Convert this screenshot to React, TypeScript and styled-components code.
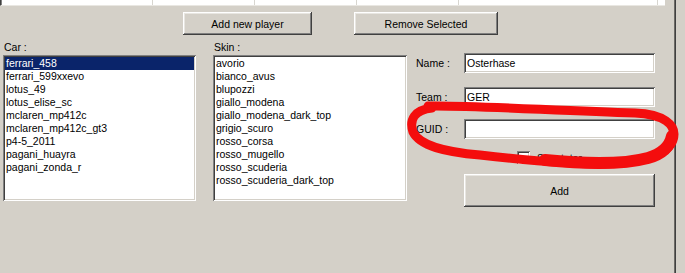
import React from "react";
import styled, { createGlobalStyle } from "styled-components";

const Global = createGlobalStyle`
  html, body { margin: 0; padding: 0; background: #d4d0c8; }
  body { font-family: "Liberation Sans", Arial, sans-serif; font-size: 10.5px; color: #000; }
`;

const Window = styled.div`
  position: relative;
  width: 685px;
  height: 273px;
  background: #d4d0c8;
  display: flex;
  overflow: hidden;
`;

const Main = styled.div`
  width: 674px;
  display: flex;
  flex-direction: column;
`;

const Splitter = styled.div`
  width: 2px;
  background: #404040;
  box-shadow: inset 1px 0 #6c6a66;
`;

const TopTable = styled.div`
  display: flex;
  width: 665px;
  height: 6px;
  background: #fff;
  border-left: 1px solid #404040;
  border-bottom: 1px solid #e9e7e2;
  box-sizing: border-box;
  box-shadow: inset 1px 0 #808080;
`;

const TopCell = styled.div<{ $w: number }>`
  width: ${(p) => p.$w}px;
  height: 100%;
  border-right: 1px solid #d8d6d0;
`;

const ButtonRow = styled.div`
  display: flex;
  gap: 42px;
  padding: 6px 0 0 183px;
`;

const Button = styled.button<{ $w: number; $h: number }>`
  width: ${(p) => p.$w}px;
  height: ${(p) => p.$h}px;
  margin: 0;
  padding: 1px 0 0;
  border: none;
  background: #d4d0c8;
  font-family: "Liberation Sans", Arial, sans-serif;
  font-size: 10.5px;
  color: #000;
  display: flex;
  align-items: center;
  justify-content: center;
  box-shadow: inset -1px -1px #404040, inset 1px 1px #ffffff,
    inset -2px -2px #808080, inset 2px 2px #e8e6e1;
`;

const Content = styled.div`
  display: flex;
  padding: 4px 0 0 3px;
`;

const ListColumn = styled.div<{ $w: number; $ml: number }>`
  width: ${(p) => p.$w}px;
  margin-left: ${(p) => p.$ml}px;
  display: flex;
  flex-direction: column;
`;

const Label = styled.div`
  height: 16px;
  line-height: 16px;
  padding-left: 1px;
  white-space: nowrap;
`;

const ListBox = styled.div`
  height: 146px;
  background: #fff;
  padding: 2px;
  box-sizing: border-box;
  box-shadow: inset 1px 1px #808080, inset -1px -1px #ffffff,
    inset 2px 2px #404040, inset -2px -2px #d4d0c8;
`;

const Item = styled.div<{ $sel?: boolean }>`
  height: 13px;
  line-height: 13px;
  padding-left: 1px;
  white-space: nowrap;
  background: ${(p) => (p.$sel ? "#0a246a" : "transparent")};
  color: ${(p) => (p.$sel ? "#fff" : "#000")};
`;

const Form = styled.div`
  margin-left: 8px;
  padding-top: 14px;
  display: flex;
  flex-direction: column;
`;

const FormRow = styled.div<{ $mt: number }>`
  display: flex;
  align-items: center;
  margin-top: ${(p) => p.$mt}px;
`;

const FieldLabel = styled.div`
  width: 49px;
  padding-left: 1px;
  box-sizing: border-box;
  white-space: nowrap;
`;

const TextBox = styled.div`
  width: 191px;
  height: 20px;
  line-height: 20px;
  padding: 0 3px;
  box-sizing: border-box;
  background: #fff;
  box-shadow: inset 1px 1px #808080, inset -1px -1px #ffffff,
    inset 2px 2px #404040, inset -2px -2px #d4d0c8;
`;

const CheckRow = styled.div`
  display: flex;
  align-items: center;
  gap: 7px;
  margin: 12px 0 0 102px;
  height: 13px;
`;

const CheckBox = styled.div`
  width: 13px;
  height: 13px;
  background: #fff;
  box-sizing: border-box;
  box-shadow: inset 1px 1px #808080, inset -1px -1px #ffffff,
    inset 2px 2px #404040, inset -2px -2px #d4d0c8;
`;

const AddWrap = styled.div`
  margin: 10px 0 0 49px;
`;

const Ink = styled.svg`
  position: absolute;
  left: 0;
  top: 0;
  pointer-events: none;
`;

const cars = [
  "ferrari_458",
  "ferrari_599xxevo",
  "lotus_49",
  "lotus_elise_sc",
  "mclaren_mp412c",
  "mclaren_mp412c_gt3",
  "p4-5_2011",
  "pagani_huayra",
  "pagani_zonda_r",
];

const skins = [
  "avorio",
  "bianco_avus",
  "blupozzi",
  "giallo_modena",
  "giallo_modena_dark_top",
  "grigio_scuro",
  "rosso_corsa",
  "rosso_mugello",
  "rosso_scuderia",
  "rosso_scuderia_dark_top",
];

export default function App() {
  return (
    <>
      <Global />
      <Window>
        <Main>
          <TopTable>
            <TopCell $w={151} />
            <TopCell $w={101} />
            <TopCell $w={101} />
            <TopCell $w={101} />
            <TopCell $w={198} />
          </TopTable>
          <ButtonRow>
            <Button $w={129} $h={23}>Add new player</Button>
            <Button $w={144} $h={23}>Remove Selected</Button>
          </ButtonRow>
          <Content>
            <ListColumn $w={193} $ml={0}>
              <Label>Car :</Label>
              <ListBox>
                {cars.map((c, i) => (
                  <Item key={c} $sel={i === 0}>
                    {c}
                  </Item>
                ))}
              </ListBox>
            </ListColumn>
            <ListColumn $w={194} $ml={17}>
              <Label>Skin :</Label>
              <ListBox>
                {skins.map((s) => (
                  <Item key={s}>{s}</Item>
                ))}
              </ListBox>
            </ListColumn>
            <Form>
              <FormRow $mt={0}>
                <FieldLabel>Name :</FieldLabel>
                <TextBox>Osterhase</TextBox>
              </FormRow>
              <FormRow $mt={14}>
                <FieldLabel>Team :</FieldLabel>
                <TextBox>GER</TextBox>
              </FormRow>
              <FormRow $mt={12}>
                <FieldLabel>GUID :</FieldLabel>
                <TextBox />
              </FormRow>
              <CheckRow>
                <CheckBox />
                <span>Spectator</span>
              </CheckRow>
              <AddWrap>
                <Button $w={191} $h={33}>Add</Button>
              </AddWrap>
            </Form>
          </Content>
        </Main>
        <Splitter />
        <Ink width="685" height="273" viewBox="0 0 685 273">
          <path
            d="M 428 106 C 470 105, 560 111, 635 113 C 662 114, 678 124, 673 140 C 668 155, 645 163, 605 164 C 565 164, 525 160, 480 155 C 445 152, 420 146, 413 132 C 409 120, 414 110, 432 108"
            fill="none"
            stroke="#f40d0d"
            strokeWidth="9"
            strokeLinecap="round"
            strokeLinejoin="round"
          />
          <path
            d="M 545 160 C 585 164, 622 165, 648 158 C 662 154, 670 146, 672 136"
            fill="none"
            stroke="#f40d0d"
            strokeWidth="12"
            strokeLinecap="round"
          />
        </Ink>
      </Window>
    </>
  );
}
